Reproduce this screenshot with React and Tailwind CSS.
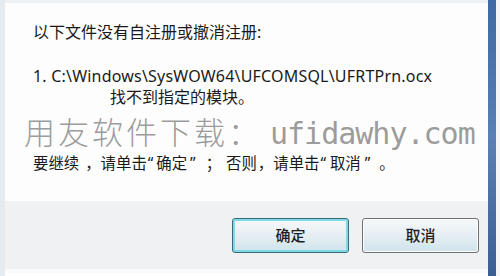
import React from "react";

const cjk = "font-['Noto_Sans','Noto_Sans_CJK_SC',sans-serif]";
const latinQuote = "font-['Noto_Sans',sans-serif]";

function DlgButton({ label, focused }) {
    return (
        <button
            className={
                "w-[117px] h-[35px] rounded-[3px] border text-[15px] font-medium text-[#1e1e1e] bg-gradient-to-b from-[#f6f9fb] via-[#e6eef3] to-[#cfe3ec] font-['Noto_Sans_CJK_SC',sans-serif]" +
                (focused
                    ? " border-[#3a6a78] shadow-[inset_0_0_0_2px_#7fd9e6]"
                    : " border-[#707070] shadow-[inset_0_0_0_1px_#fbfdfe]")
            }
        >
            {label}
        </button>
    );
}

export default function App() {
    return (
        <div className="w-[500px] h-[276px] bg-white flex overflow-hidden relative">
            {/* linker Rand */}
            <div className="w-[5px] bg-[#e6ebef]" />

            <div className="flex-1 flex flex-col">
                <div className="h-[3px] bg-[#eef1f3]" />

                <div className={"h-[198px] bg-[#fdfdfd] pl-[28px] pt-[19px] text-[16px] leading-[20px] text-[#1a1a1a] " + cjk}>
                    <div>以下文件没有自注册或撤消注册:</div>
                    <div className="mt-[24px] tracking-[0.2px]">1. C:\Windows\SysWOW64\UFCOMSQL\UFRTPrn.ocx</div>
                    <div className="mt-[1px] pl-[77px]">找不到指定的模块。</div>
                    {/* breite Satzzeichen wie im Original */}
                    <div className="mt-[45px] flex items-baseline whitespace-nowrap text-[15.4px] font-['Noto_Sans_CJK_SC',sans-serif]">
                        <span>要继续</span>
                        <span className="ml-[6px]">，</span>
                        <span>请单击</span>
                        <span className={"ml-[1px] " + latinQuote}>“</span>
                        <span className="ml-[3px]">确定</span>
                        <span className={"ml-[3px] " + latinQuote}>”</span>
                        <span className="ml-[10px]">；</span>
                        <span className="ml-[5px]">否则</span>
                        <span className="ml-[1px]">，</span>
                        <span>请单击</span>
                        <span className={"ml-[1px] " + latinQuote}>“</span>
                        <span className="ml-[4px]">取消</span>
                        <span className={"ml-[4px] " + latinQuote}>”</span>
                        <span className="ml-[9px]">。</span>
                    </div>
                </div>

                <div className="h-[68px] bg-[#f0f1f3] flex items-center justify-end gap-[13px] pr-[9px]">
                    <DlgButton label="确定" focused />
                    <DlgButton label="取消" />
                </div>

                <div className="h-[4px] bg-[#fafafa]" />
            </div>

            {/* rechter Fensterrahmen */}
            <div className="w-[8px] bg-gradient-to-b from-[#3f6aa3] via-[#5a80b4] to-[#3c5f92]" />
            <div className="w-[4px] bg-[#f4f6f8]" />

            {/* Wasserzeichen */}
            <div className="absolute left-[24px] top-[115px] flex items-baseline leading-[32px] text-[#8f8f8f]/90 pointer-events-none">
                <span className="text-[31px] tracking-[3px] font-['Noto_Sans_CJK_SC',sans-serif] font-light">用友软件下载：</span>
                <span className="ml-[8px] text-[30px] font-['DejaVu_Sans_Mono',monospace] -tracking-[1px]">ufidawhy.com</span>
            </div>
        </div>
    );
}
